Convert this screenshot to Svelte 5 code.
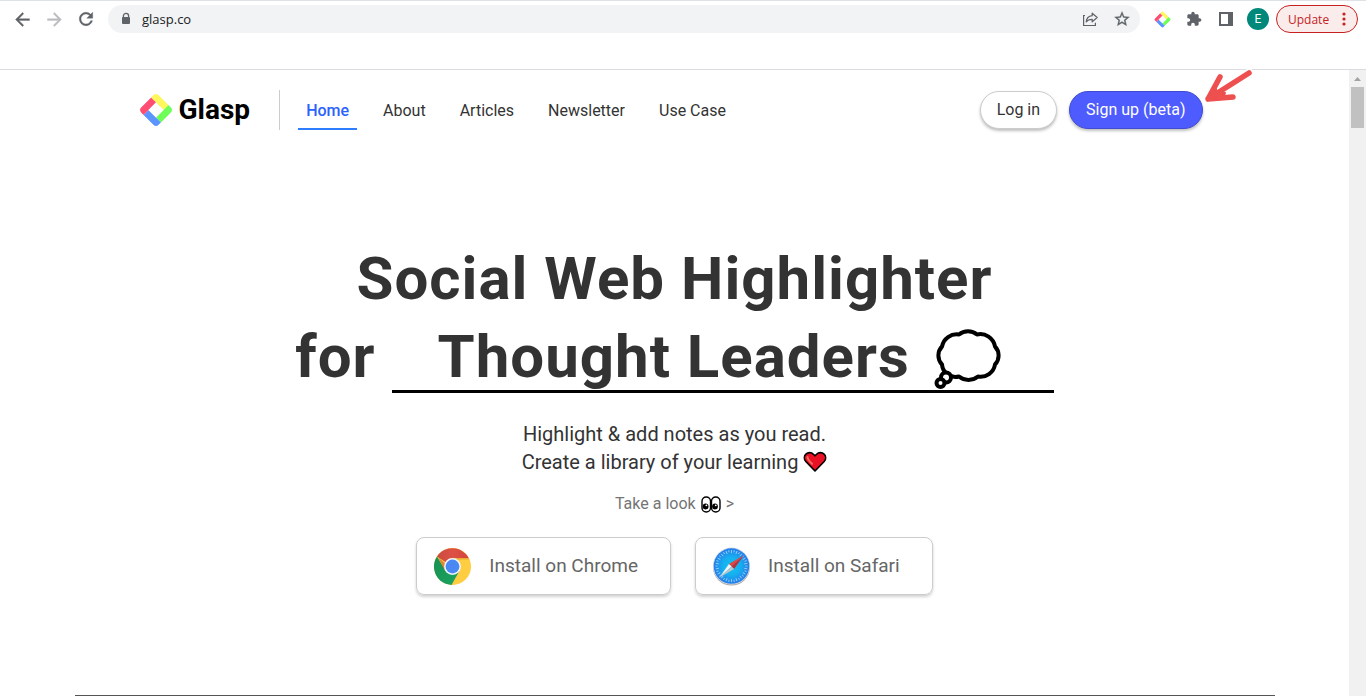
<script>
  const links = ['Home', 'About', 'Articles', 'Newsletter', 'Use Case'];
  const ticks = Array.from({ length: 36 }, (_, i) => i * 10);
</script>

{#snippet mark(size)}
  <svg width={size} height={size} viewBox="0 0 32 32" aria-hidden="true">
    <g transform="rotate(45 16 16)">
      <clipPath id="mark-{size}"><rect x="4.500" y="4.500" width="23" height="23" rx="3.500" /></clipPath>
      <g clip-path="url(#mark-{size})">
        <path fill="#fff75c" d="M4 4h17v7H4z" />
        <path fill="#6dff57" d="M21 4h7v17h-7z" />
        <path fill="#5c95ff" d="M11 21h17v7H11z" />
        <path fill="#ff4d74" d="M4 11h7v17H4z" />
      </g>
      <path fill="#fff" d="M11 11h10v10H11z" />
    </g>
  </svg>
{/snippet}

<div class="browser">
  <div class="toolbar">
    <button class="tool" aria-label="Back">
      <svg width="21" height="21" viewBox="0 0 24 24"><path fill="#5f6368" stroke="#5f6368" stroke-width=".4" d="M20 11H7.830l5.590-5.590L12 4l-8 8 8 8 1.410-1.410L7.830 13H20v-2z" /></svg>
    </button>
    <button class="tool" aria-label="Forward">
      <svg width="21" height="21" viewBox="0 0 24 24"><path fill="#babcbe" stroke="#babcbe" stroke-width=".4" d="M4 11h12.170l-5.590-5.590L12 4l8 8-8 8-1.410-1.410L16.170 13H4v-2z" /></svg>
    </button>
    <button class="tool" aria-label="Reload">
      <svg width="20" height="20" viewBox="0 0 24 24"><path fill="#5f6368" stroke="#5f6368" stroke-width=".5" d="M17.65 6.35C16.2 4.9 14.21 4 12 4c-4.42 0-7.99 3.58-7.99 8s3.57 8 7.99 8c3.73 0 6.84-2.55 7.73-6h-2.08c-.82 2.33-3.04 4-5.65 4-3.31 0-6-2.69-6-6s2.69-6 6-6c1.66 0 3.14.69 4.22 1.78L13 11h7V4l-2.35 2.35z" /></svg>
    </button>

    <div class="address">
      <svg width="12" height="14" viewBox="0 0 12 14" aria-hidden="true">
        <path fill="none" stroke="#5f6368" stroke-width="1.3" d="M3.4 6V4a2.6 2.6 0 0 1 5.2 0v2" />
        <rect x="2" y="5" width="8" height="7" rx="1" fill="#5f6368" />
      </svg>
      <input aria-label="Address" value="glasp.co" />
      <button class="tool" aria-label="Share">
        <svg width="18" height="18" viewBox="0 0 18 18" fill="none" stroke="#5f6368" stroke-width="1.2">
          <path d="M4 5.5H2.600v10h11.800v-2.800" />
          <path stroke-linejoin="round" d="M11.2 3.200l5 4.300-5 4.300V9.400c-2.800 0-4.700.7-6 2.500.3-3.500 2.200-5.800 6-6.200z" />
        </svg>
      </button>
      <button class="tool" aria-label="Bookmark">
        <svg width="18" height="18" viewBox="0 0 24 24"><path fill="#5f6368" stroke="#5f6368" stroke-width=".4" d="M22 9.24l-7.19-.62L12 2 9.19 8.63 2 9.24l5.46 4.73L5.82 21 12 17.27 18.18 21l-1.63-7.03L22 9.24zM12 15.4l-3.76 2.27 1-4.28-3.32-2.88 4.38-.38L12 6.1l1.71 4.04 4.38.38-3.32 2.88 1 4.28L12 15.4z" /></svg>
      </button>
    </div>

    <button class="tool" aria-label="Glasp extension">{@render mark(17)}</button>
    <button class="tool" aria-label="Extensions">
      <svg width="16" height="16" viewBox="0 0 24 24"><path fill="#5f6368" d="M20.5 11H19V7c0-1.1-.9-2-2-2h-4V3.5C13 2.12 11.88 1 10.5 1S8 2.12 8 3.5V5H4c-1.1 0-1.99.9-1.99 2v3.8H3.5c1.49 0 2.7 1.21 2.7 2.7s-1.21 2.7-2.7 2.7H2V20c0 1.1.9 2 2 2h3.8v-1.5c0-1.49 1.21-2.7 2.7-2.7s2.7 1.21 2.7 2.7V22H17c1.1 0 2-.9 2-2v-4h1.5c1.38 0 2.5-1.12 2.5-2.5S21.88 11 20.5 11z" /></svg>
    </button>
    <button class="tool" aria-label="Side panel">
      <svg width="14" height="14" viewBox="0 0 14 14"><path fill="#5f6368" fill-rule="evenodd" d="M0 0h14v14H0zM2 2v10h7V2z" /></svg>
    </button>
    <button class="tool" aria-label="Profile"><span class="avatar">E</span></button>
    <button class="update">
      Update
      <svg width="4" height="14" viewBox="0 0 4 14" fill="#c5221f" aria-hidden="true">
        <circle cx="2" cy="2" r="1.6" /><circle cx="2" cy="7" r="1.6" /><circle cx="2" cy="12" r="1.6" />
      </svg>
    </button>
  </div>

  <div class="viewport">
    <div class="page">
      <header>
        <a class="brand" href="#home">{@render mark(34)}<span>Glasp</span></a>
        <nav>
          {#each links as link, i}
            <a href="#{link}" class:active={i === 0}>{link}</a>
          {/each}
        </nav>
        <div class="account">
          <button class="pill">Log in</button>
          <div class="signup">
            <button class="pill primary">Sign up (beta)</button>
            <svg class="pointer" width="54" height="42" viewBox="0 0 54 42" aria-hidden="true" fill="none" stroke-linecap="round" stroke-linejoin="round">
              <path stroke="#fff" stroke-width="9" d="M46 6L6 32" />
              <path stroke="#ee4f4f" stroke-width="5.500" d="M46 6L5 32L17 10M5 32L30 30" />
              <path fill="#ee4f4f" stroke="#ee4f4f" stroke-width="2" d="M5 32l7-12 2 5 8 1-2 5z" />
            </svg>
          </div>
        </div>
      </header>

      <main>
        <h1>
          <span>Social Web Highlighter</span>
          <span class="audience">
            <span>for</span>
            <span class="rotating">
              Thought Leaders
              <svg width="82" height="66" viewBox="0 0 82 66" role="img" aria-label="thought balloon">
                <path fill="#fff" stroke="#000" stroke-width="4" stroke-linejoin="round" d="M33 10.500a14 14 0 0 1 18 0a15 15 0 0 1 18 12a13 13 0 0 1 0 18a14.500 14.500 0 0 1-17 12a15 15 0 0 1-19 0a13.500 13.500 0 0 1-17-12a13 13 0 0 1 0-18a15 15 0 0 1 17-12z" />
                <circle cx="20" cy="53.500" r="5" fill="#fff" stroke="#000" stroke-width="4" />
                <circle cx="14.500" cy="59" r="4" fill="#fff" stroke="#000" stroke-width="4" />
              </svg>
            </span>
          </span>
        </h1>

        <p class="lead">
          Highlight &amp; add notes as you read.<br />
          Create a library of your learning
          <svg width="24" height="22" viewBox="0 0 24 22" role="img" aria-label="heart">
            <path fill="#e81224" stroke="#000" stroke-width="1.600" stroke-linejoin="round" d="M12 20L2.800 10.500C.8 8.200.9 5 2.900 3.100 5 1.100 8.400 1.200 10.400 3.200L12 4.800l1.600-1.600c2-2 5.400-2.100 7.500-.1 2 1.900 2.100 5.100.1 7.400z" />
            <path fill="none" stroke="#f56b5c" stroke-width="2" stroke-linecap="round" d="M4.500 6c.2 2.800 1.500 4 4.500 6.800" />
          </svg>
        </p>

        <a class="look" href="#look">
          Take a look
          <svg width="20" height="17" viewBox="0 0 20 17" role="img" aria-label="eyes">
            <g fill="#fff" stroke="#000" stroke-width="1.400">
              <rect x="1" y="1" width="8.500" height="15" rx="4.200" />
              <rect x="10.500" y="1" width="8.500" height="15" rx="4.200" />
            </g>
            <circle cx="4.600" cy="10.500" r="2.900" /><circle cx="14" cy="10.500" r="2.900" />
            <circle cx="5.400" cy="9.300" r=".9" fill="#fff" /><circle cx="14.800" cy="9.300" r=".9" fill="#fff" />
          </svg>
          &gt;
        </a>

        <div class="installs">
          <button class="install">
            <svg width="37" height="37" viewBox="0 0 36 36" aria-hidden="true">
              <defs>
                <linearGradient id="red" x2="1" y2="0"><stop offset="0" stop-color="#c94a3f" /><stop offset=".5" stop-color="#de5145" /><stop offset="1" stop-color="#d34439" /></linearGradient>
                <linearGradient id="green" x2="1" y2="1"><stop offset="0" stop-color="#159150" /><stop offset="1" stop-color="#1da462" /></linearGradient>
              </defs>
              <circle cx="18" cy="18" r="18" fill="#ffcd40" />
              <path fill="url(#red)" d="M18 18L2.900 8.200A18 18 0 0 1 33.900 9.900H18z" />
              <path fill="url(#green)" d="M2.900 8.200L11 22l14 0L17 36A18 18 0 0 1 2.900 8.200z" />
              <path fill="#c14035" opacity=".5" d="M4 9l6 12 1-6z" />
              <path fill="#d9a72c" opacity=".45" d="M18 9.900h15.900l.6 1.500-14 .2z" />
              <circle cx="18" cy="18" r="8.200" fill="#f1f5fb" />
              <circle cx="18" cy="18" r="6.700" fill="#4a89f3" />
            </svg>
            <span>Install on Chrome</span>
          </button>
          <button class="install">
            <svg width="37" height="37" viewBox="0 0 36 36" aria-hidden="true" overflow="visible">
              <defs><radialGradient id="sky"><stop offset="0" stop-color="#0fc5ef" /><stop offset=".5" stop-color="#16aff0" /><stop offset="1" stop-color="#247dea" /></radialGradient></defs>
              <circle cx="18" cy="18.600" r="18" fill="#a9a9a9" />
              <circle cx="18" cy="17.600" r="18" fill="#d6dce3" />
              <circle cx="18" cy="17.600" r="17.300" fill="url(#sky)" />
              {#each ticks as angle, i}
                <path stroke="#d5ecff" stroke-width=".6" d={i % 2 ? 'M18 2v2' : 'M18 2v3'} transform="rotate({angle} 18 17.600)" />
              {/each}
              <path fill="#e8443f" d="M30 7L15.500 15.500l2.500 2.500z" />
              <path fill="#bd3038" d="M30 7L20.500 20.500 18 18z" />
              <path fill="#f3f4f6" d="M15.500 15.500L6 29l12-11z" />
              <path fill="#b9c5cf" d="M20.500 20.500L6 29l12-11z" />
            </svg>
            <span>Install on Safari</span>
          </button>
        </div>
      </main>
      <hr />
    </div>
    <div class="scrollbar" aria-hidden="true">
      <svg width="17" height="17" viewBox="0 0 17 17"><path fill="#a3a3a3" d="M5 11l3.500-4L12 11z" /></svg>
      <div class="thumb"></div>
    </div>
  </div>
</div>

<style>
  :global(body) { margin: 0; background: #fff; }
  * { box-sizing: border-box; }
  button { border: 0; padding: 0; background: none; font: inherit; color: inherit; cursor: pointer; }
  a { text-decoration: none; color: inherit; }
  svg { display: block; flex: none; }

  .browser {
    min-height: 100vh;
    display: flex;
    flex-direction: column;
    font-family: Roboto, sans-serif;
    color: #333;
  }

  .toolbar {
    display: flex;
    align-items: flex-start;
    height: 70px;
    padding: 4px 8px 0 6px;
    border-top: 1px solid #dee1e6;
    border-bottom: 1px solid #dadce0;
    font-family: "Open Sans", sans-serif;
  }
  .tool { flex: none; width: 32px; height: 28px; display: grid; place-items: center; }
  .address {
    flex: 1;
    display: flex;
    align-items: center;
    height: 28px;
    margin: 0 6px;
    padding: 0 2px 0 12px;
    border-radius: 14px;
    background: #f1f3f4;
  }
  .address input {
    flex: 1;
    min-width: 0;
    margin-left: 10px;
    padding: 0;
    border: 0;
    background: none;
    color: #202124;
    font: 13px/20px "Open Sans", sans-serif;
  }
  .avatar {
    width: 22px;
    border-radius: 50%;
    background: #00897b;
    color: #fff;
    font: 12px/22px Roboto, sans-serif;
  }
  .update {
    flex: none;
    display: flex;
    align-items: center;
    justify-content: space-between;
    width: 82px;
    height: 28px;
    margin-left: 2px;
    padding: 0 11px;
    border: 1px solid #c5221f;
    border-radius: 14px;
    background: #faeceb;
    color: #c5221f;
    font-size: 12px;
  }

  .viewport { flex: 1; display: flex; }
  .page { flex: 1; min-width: 0; display: flex; flex-direction: column; }
  .scrollbar { width: 17px; background: #f1f1f1; }
  .thumb { height: 41px; margin: 0 2px; background: #c1c1c1; }

  header {
    width: 100%;
    max-width: 1200px;
    margin: 0 auto;
    padding: 20px 72px 20px 64px;
    display: flex;
    align-items: center;
  }
  .brand {
    display: flex;
    align-items: center;
    gap: 6px;
    color: #000;
    font-size: 28px;
    font-weight: 700;
    line-height: 40px;
  }
  nav {
    display: flex;
    gap: 18px;
    margin-left: 29px;
    padding-left: 18px;
    border-left: 1px solid #ccc;
    line-height: 42px;
  }
  nav a { height: 40px; padding: 0 8px; white-space: nowrap; }
  .active { color: #2962ff; font-weight: 500; border-bottom: 2px solid #2e7dff; }
  .account { display: flex; gap: 12px; margin-left: auto; }
  .signup { position: relative; }
  .pointer { position: absolute; left: 100%; bottom: 20px; }
  .pill {
    height: 38px;
    padding: 0 16px 2px;
    border: 1px solid #ccc;
    border-radius: 19px;
    background: #fff;
    font-size: 16px;
    white-space: nowrap;
    box-shadow: 0 2px 3px rgba(0, 0, 0, .25);
  }
  .primary { background: #4d5bff; border-color: #3f4cd0; color: #fff; }

  main { display: flex; flex-direction: column; align-items: center; padding: 90px 24px 100px; }
  h1 {
    margin: 0;
    display: flex;
    flex-direction: column;
    align-items: center;
    font-size: 60px;
    font-weight: 700;
    line-height: 78px;
    letter-spacing: 1px;
  }
  .audience { display: flex; align-items: baseline; gap: 16px; }
  .rotating {
    display: flex;
    gap: 16px;
    padding: 0 46px;
    border-bottom: 3px solid #000;
    line-height: 66px;
  }
  .lead { margin: 24px 0 0; font-size: 20px; line-height: 28px; text-align: center; }
  .lead svg { display: inline-block; vertical-align: -4px; }
  .look { display: flex; align-items: center; gap: 5px; margin-top: 18px; color: #757575; line-height: 20px; }
  .installs { display: flex; gap: 24px; margin-top: 23px; }
  .install {
    display: flex;
    align-items: center;
    gap: 18px;
    height: 58px;
    padding: 0 32px 0 17px;
    border: 1px solid #ccc;
    border-radius: 8px;
    color: #666;
    font-size: 19px;
    box-shadow: 0 2px 3px rgba(0, 0, 0, .18);
  }
  .install span { padding-bottom: 2px; }
  hr { width: 100%; max-width: 1200px; height: 1px; margin: 0 auto; border: 0; background: #555; }
</style>
